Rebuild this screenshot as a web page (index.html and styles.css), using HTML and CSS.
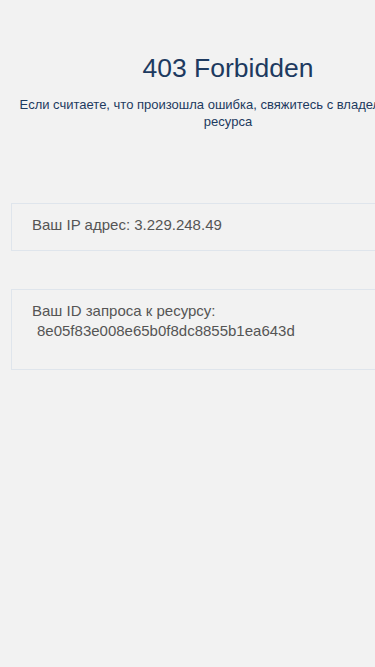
FILE: index.html
```html
<!DOCTYPE html>
<html lang="ru">
  <head>
    <meta charset="UTF-8" />
    <meta name="viewport" content="width=device-width, initial-scale=1.0" />
    <title>403 Forbidden</title>
    <link rel="stylesheet" href="styles.css">
  </head>
  <body>
    <div class="page">
      <h1 class="title">403 Forbidden</h1>
      <p class="subtitle">Если считаете, что произошла ошибка, свяжитесь с владельцем ресурса</p>

      <div class="info_box">Ваш IP адрес: 3.229.248.49</div>

      <div class="info_box info_box--tall">
        Ваш ID запроса к ресурсу:<br />
        <span class="req_id">8e05f83e008e65b0f8dc8855b1ea643d</span>
      </div>
    </div>
  </body>
</html>
```

FILE: styles.css
```css
html,
body {
  margin: 0;
  padding: 0;
  background-color: #f2f2f2;
}

body {
  font-family: "Liberation Sans", Arial, sans-serif;
}

.page {
  width: 456px;
}

.title {
  margin: 53px 0 0;
  font-size: 26.5px;
  line-height: 30px;
  font-weight: normal;
  text-align: center;
  color: #1d3a60;
}

.subtitle {
  margin: 13px 0 0;
  padding: 0 30px;
  font-size: 13px;
  line-height: 17px;
  text-indent: -26px;
  text-align: center;
  color: #1d3a60;
}

.info_box {
  margin: 73px 11px 0;
  padding: 11px 20px 15px;
  border: 1px solid #dfe5ec;
  font-size: 15px;
  line-height: 20px;
  color: #555555;
}

.info_box--tall {
  margin-top: 38px;
  padding-bottom: 28px;
}

.req_id {
  margin-left: 5px;
}
```
